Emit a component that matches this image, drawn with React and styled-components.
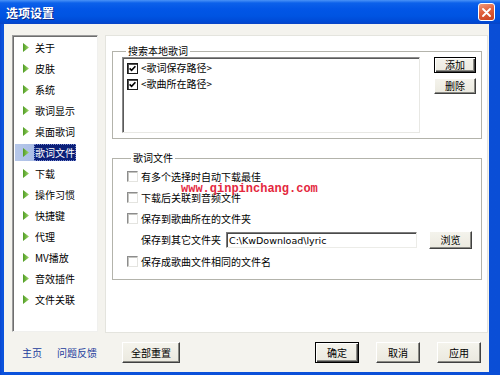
import React from 'react';
import styled, { createGlobalStyle } from 'styled-components';

const CJK = `"Noto Sans CJK SC", "Liberation Sans", sans-serif`;

const GlobalStyle = createGlobalStyle`
  html, body { margin: 0; padding: 0; background: #fff; }
  body { font-family: ${CJK}; }
  * { box-sizing: border-box; }
`;

const menuItems = ['关于', '皮肤', '系统', '歌词显示', '桌面歌词', '歌词文件', '下载', '操作习惯', '快捷键', '代理', 'MV播放', '音效插件', '文件关联'];

const searchPaths = ['<歌词保存路径>', '<歌曲所在路径>'];

export default function App() {
  const selected = 5;

  return (
    <>
      <GlobalStyle />
      <Window>
        <TitleBar>
          <Title>选项设置</Title>
          <CloseBtn>
            <svg width="9" height="9" viewBox="0 0 9 9">
              <path d="M1 1 L8 8 M8 1 L1 8" stroke="#fff" strokeWidth="1.8" strokeLinecap="round" />
            </svg>
          </CloseBtn>
        </TitleBar>

        <Frame>
          <Body>
            <Main>
              <Sidebar>
                {menuItems.map((name, i) => (
                  <MenuItem key={name}>
                    <MenuInner $active={i === selected}>
                      <Arrow width="6" height="9" viewBox="0 0 6 9">
                        <defs>
                          <linearGradient id={`ag${i}`} x1="0" y1="0" x2="1" y2="0">
                            <stop offset="0" stopColor="#4f9c24" />
                            <stop offset="1" stopColor="#9fd66a" />
                          </linearGradient>
                        </defs>
                        <path d="M0 0 L6 4.5 L0 9 Z" fill={`url(#ag${i})`} />
                      </Arrow>
                      <MenuLabel $active={i === selected}>{name}</MenuLabel>
                    </MenuInner>
                  </MenuItem>
                ))}
              </Sidebar>

              <Panel>
                <GroupBox $first>
                  <Legend>搜索本地歌词</Legend>
                  <SearchRow>
                    <ListBox>
                      {searchPaths.map((p) => (
                        <ListRow key={p}>
                          <CheckBox $checked>
                            <svg width="7" height="7" viewBox="0 0 7 7">
                              <path d="M0.6 3.4 L2.6 5.4 L6.4 1.2" stroke="#000" strokeWidth="1.6" fill="none" />
                            </svg>
                          </CheckBox>
                          <RowText>{p}</RowText>
                        </ListRow>
                      ))}
                    </ListBox>
                    <SideButtons>
                      <Button $w={42} $h={16} $default>添加</Button>
                      <Button $w={42} $h={16}>删除</Button>
                    </SideButtons>
                  </SearchRow>
                </GroupBox>

                <GroupBox>
                  <Legend>歌词文件</Legend>
                  <OptionRow>
                    <CheckBox />
                    <RowText>有多个选择时自动下载最佳</RowText>
                  </OptionRow>
                  <OptionRow>
                    <CheckBox />
                    <RowText>下载后关联到音频文件</RowText>
                  </OptionRow>
                  <OptionRow>
                    <CheckBox />
                    <RowText>保存到歌曲所在的文件夹</RowText>
                  </OptionRow>
                  <OptionRow $tall>
                    <PathLabel>保存到其它文件夹</PathLabel>
                    <PathInput>C:\KwDownload\lyric</PathInput>
                    <Button $w={43} $h={18} $ml={12}>浏览</Button>
                  </OptionRow>
                  <OptionRow>
                    <CheckBox />
                    <RowText>保存成歌曲文件相同的文件名</RowText>
                  </OptionRow>
                </GroupBox>

                <Watermark>www.qinpinchang.com</Watermark>
              </Panel>
            </Main>

            <Footer>
              <Link>主页</Link>
              <Link>问题反馈</Link>
              <Button $w={58} $h={21} $ml={25}>全部重置</Button>
              <FooterButtons>
                <Button $w={44} $h={21} $default>确定</Button>
                <Button $w={44} $h={21}>取消</Button>
                <Button $w={44} $h={21}>应用</Button>
              </FooterButtons>
            </Footer>
          </Body>
        </Frame>
      </Window>
    </>
  );
}

// 窗口外框

const Window = styled.div`
  width: 500px;
  height: 375px;
  display: flex;
  flex-direction: column;
  overflow: hidden;
  background: linear-gradient(90deg, #0a46d0 0, #0b52dc 2px, #0a4ed6 100%);
`;

const TitleBar = styled.div`
  height: 24px;
  flex-shrink: 0;
  display: flex;
  align-items: center;
  padding: 0 5px 0 6px;
  background: linear-gradient(180deg, #4a93f7 0, #0c61ea 3px, #0256e6 9px, #0054e2 16px, #0049d4 22px, #0a44c4 24px);
`;

const Title = styled.span`
  color: #fff;
  font-size: 12px;
  font-weight: 700;
  letter-spacing: 0;
  text-shadow: 1px 1px 0 #0b2a8a;
`;

const CloseBtn = styled.span`
  margin-left: auto;
  width: 17px;
  height: 18px;
  display: flex;
  align-items: center;
  justify-content: center;
  border: 1px solid #fff;
  border-radius: 3px;
  background: linear-gradient(160deg, #f09a7c 0%, #e0603c 45%, #c8401e 100%);
`;

const Frame = styled.div`
  flex: 1;
  display: flex;
  padding: 0 11px 3px 4px;
`;

const Body = styled.div`
  flex: 1;
  display: flex;
  flex-direction: column;
  background: #f4f3ee;
`;

const Main = styled.div`
  display: flex;
  align-items: flex-start;
  padding: 11px 0 0 8px;
`;

// 左侧菜单

const Sidebar = styled.ul`
  margin: 0;
  padding: 0;
  list-style: none;
  width: 86px;
  height: 297px;
  background: #fff;
  border-style: solid;
  border-width: 1px;
  border-color: #9c9c9c #f0f0ee #f0f0ee #9c9c9c;
  box-shadow: inset 1px 1px 0 #6e6e6e;
  padding-top: 1px;
`;

const MenuItem = styled.li`
  height: 21px;
  display: flex;
  align-items: center;
  padding-left: 2px;
`;

const MenuInner = styled.div`
  height: 17px;
  display: flex;
  align-items: center;
  padding-left: 8px;
  background: ${(p) => (p.$active ? 'linear-gradient(90deg, #b7c8ea, #8ea7dc)' : 'transparent')};
`;

const Arrow = styled.svg`
  flex-shrink: 0;
`;

const MenuLabel = styled.span`
  margin-left: 5px;
  height: 17px;
  line-height: 17px;
  padding: 0 1px;
  font-size: 10px;
  color: ${(p) => (p.$active ? '#fff' : '#000')};
  background: ${(p) => (p.$active ? '#0a1f78' : 'transparent')};
  outline: ${(p) => (p.$active ? '1px dotted #7a8ad0' : 'none')};
  outline-offset: -1px;
`;

// 右侧面板

const Panel = styled.div`
  position: relative;
  margin-left: 7px;
  width: 383px;
  height: 298px;
  background: #fff;
  border: 1px solid #e4e4de;
`;

const GroupBox = styled.fieldset`
  margin: ${(p) => (p.$first ? '8px 0 0 6px' : '12px 0 0 6px')};
  width: 370px;
  border: 1px solid #b3b3ab;
  box-shadow: inset 1px 1px 0 #fff;
  padding: ${(p) => (p.$first ? '0 5px 5px 9px' : '1px 5px 7px 14px')};
`;

const Legend = styled.legend`
  margin-left: 4px;
  padding: 0 2px;
  font-size: 10px;
  line-height: 14px;
  color: #000;
`;

const SearchRow = styled.div`
  display: flex;
  align-items: flex-start;
  margin-top: -1px;
`;

const ListBox = styled.div`
  width: 298px;
  height: 76px;
  background: #fff;
  border-style: solid;
  border-width: 1px;
  border-color: #8a8a8a #e8e8e4 #e8e8e4 #8a8a8a;
  box-shadow: inset 1px 1px 0 #5a5a5a;
  padding: 2px 0 0 4px;
`;

const ListRow = styled.div`
  height: 16px;
  display: flex;
  align-items: center;
`;

const SideButtons = styled.div`
  display: flex;
  flex-direction: column;
  gap: 5px;
  margin-left: 14px;
`;

const OptionRow = styled.div`
  height: ${(p) => (p.$tall ? '22px' : '21px')};
  display: flex;
  align-items: center;
`;

const CheckBox = styled.span`
  width: 11px;
  height: 11px;
  flex-shrink: 0;
  display: flex;
  align-items: center;
  justify-content: center;
  margin-right: 3px;
  background: #fff;
  border-style: solid;
  border-width: 1px;
  border-color: ${(p) => (p.$checked ? '#1a1a1a' : '#8c8c8c #e4e4e0 #e4e4e0 #8c8c8c')};
  box-shadow: ${(p) => (p.$checked ? 'inset 1px 1px 0 #505050' : 'inset 1px 1px 0 #c4c4c0')};
`;

const RowText = styled.span`
  font-size: 10px;
  line-height: 12px;
  color: #000;
  white-space: nowrap;
`;

const PathLabel = styled(RowText)`
  margin-left: 14px;
`;

const PathInput = styled.div`
  margin-left: 5px;
  width: 191px;
  height: 16px;
  display: flex;
  align-items: center;
  padding-left: 2px;
  background: #fff;
  border-style: solid;
  border-width: 1px;
  border-color: #7c7c7c #ecece8 #ecece8 #7c7c7c;
  box-shadow: inset 1px 1px 0 #4a4a4a;
  font-family: "DejaVu Sans", "Liberation Sans", sans-serif;
  font-size: 9.5px;
  color: #000;
  white-space: nowrap;
`;

const Watermark = styled.span`
  position: absolute;
  left: 75px;
  top: 148px;
  font-family: "Liberation Mono", "DejaVu Sans Mono", monospace;
  font-weight: 700;
  font-size: 12px;
  line-height: 10px;
  color: #e4283e;
  white-space: nowrap;
  pointer-events: none;
`;

// 按钮与底部

const Button = styled.button`
  width: ${(p) => p.$w}px;
  height: ${(p) => p.$h}px;
  margin: 0 0 0 ${(p) => p.$ml || 0}px;
  padding: 0;
  flex-shrink: 0;
  font-family: ${CJK};
  font-size: 10px;
  line-height: 1;
  color: #000;
  background: linear-gradient(180deg, #f4f3ec 0%, #ebe9df 100%);
  border-style: solid;
  border-width: 1px;
  border-color: ${(p) => (p.$default ? '#000' : '#fff #404040 #404040 #fff')};
  box-shadow: ${(p) =>
    p.$default ? 'inset 1px 1px 0 #fff, inset -1px -1px 0 #404040, inset -2px -2px 0 #8a8a84' : 'inset -1px -1px 0 #8a8a84'};
`;

const Footer = styled.div`
  flex: 1;
  display: flex;
  align-items: center;
  padding: 0 8px 0 18px;
`;

const Link = styled.span`
  font-size: 10px;
  color: #1c3c9c;
  margin-right: 15px;
  cursor: pointer;
  &:last-of-type {
    margin-right: 0;
  }
`;

const FooterButtons = styled.div`
  margin-left: auto;
  display: flex;
  gap: 17px;
`;
